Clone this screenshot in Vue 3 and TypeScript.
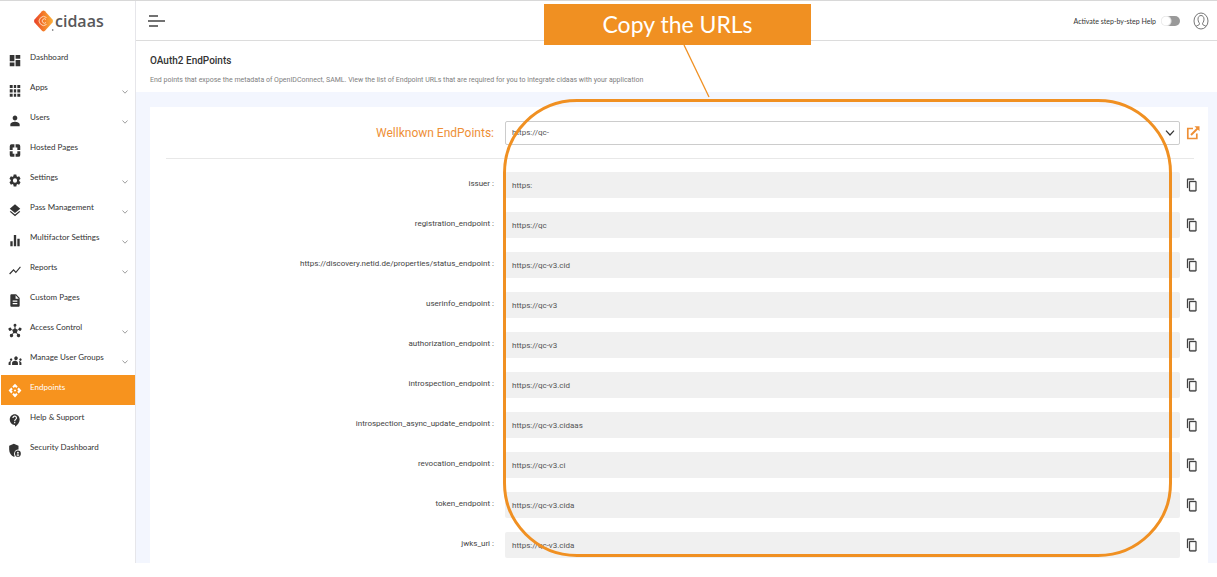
<script setup lang="ts">
import { ref } from 'vue'

interface NavItem {
  label: string
  path: string
  expandable?: boolean
  active?: boolean
}

interface Endpoint {
  name: string
  value: string
}

const navItems: NavItem[] = [
  { label: 'Dashboard', path: 'M3 13h8V3H3v10zm0 8h8v-6H3v6zm10 0h8V11h-8v10zm0-18v6h8V3h-8z' },
  { label: 'Apps', expandable: true, path: 'M3 3h5v5H3zM10 3h4v5h-4zM16 3h5v5h-5zM3 10h5v5H3zM10 10h4v5h-4zM16 10h5v5h-5zM3 17h5v5H3zM10 17h4v5h-4zM16 17h5v5h-5z' },
  { label: 'Users', expandable: true, path: 'M12 12c2.21 0 4-1.79 4-4s-1.79-4-4-4-4 1.79-4 4 1.79 4 4 4zm0 2c-2.67 0-8 1.34-8 4v3h16v-3c0-2.66-5.33-4-8-4z' },
  { label: 'Hosted Pages', path: 'M6 2h5v5H8v4H3V5a3 3 0 0 1 3-3zM13 2h5a3 3 0 0 1 3 3v6h-5V7h-3zM3 13h5v4h3v5H6a3 3 0 0 1-3-3zM16 13h5v6a3 3 0 0 1-3 3h-5v-5h3z' },
  { label: 'Settings', expandable: true, path: 'M19.14 12.94c.04-.3.06-.61.06-.94s-.02-.64-.07-.94l2.03-1.58a.49.49 0 0 0 .12-.61l-1.92-3.32a.49.49 0 0 0-.59-.22l-2.39.96a7 7 0 0 0-1.62-.94l-.36-2.54a.48.48 0 0 0-.48-.41h-3.84c-.24 0-.43.17-.47.41l-.36 2.54c-.59.24-1.13.57-1.62.94l-2.39-.96a.49.49 0 0 0-.59.22L2.74 8.87c-.12.21-.08.47.12.61l2.03 1.58c-.05.3-.09.63-.09.94s.02.64.07.94l-2.03 1.58a.49.49 0 0 0-.12.61l1.92 3.32c.12.22.37.29.59.22l2.39-.96c.5.38 1.03.7 1.62.94l.36 2.54c.05.24.24.41.48.41h3.84c.24 0 .44-.17.47-.41l.36-2.54a7 7 0 0 0 1.62-.94l2.39.96c.22.08.47 0 .59-.22l1.92-3.32a.49.49 0 0 0-.12-.61zM12 15.6A3.6 3.6 0 1 1 12 8.4a3.6 3.6 0 0 1 0 7.2z' },
  { label: 'Pass Management', expandable: true, path: 'M11.99 18.54l-7.37-5.73L3 14.07l9 7 9-7-1.63-1.27-7.38 5.74zM12 16l7.36-5.73L21 9l-9-7-9 7 1.63 1.27L12 16z' },
  { label: 'Multifactor Settings', expandable: true, path: 'M10 21h4V3h-4v18zm-6 0h4v-8H4v8zM16 9v12h4V9h-4z' },
  { label: 'Reports', expandable: true, path: 'M3.5 18.49l6-6.01 4 4L22 6.92l-1.41-1.41-7.09 7.97-4-4L2 16.99z' },
  { label: 'Custom Pages', path: 'M14 2H6c-1.1 0-2 .9-2 2v16c0 1.1.89 2 1.99 2H18c1.1 0 2-.9 2-2V8l-6-6zm2 16H8v-2h8v2zm0-4H8v-2h8v2zm-3-5V3.5L18.5 9H13z' },
  { label: 'Access Control', expandable: true, path: 'M9.5 3.5a2.5 2.5 0 1 1 3.3 2.4v2.7a4 4 0 0 1 2.8 2l2.5-.8a2.5 2.5 0 1 1 .5 1.5l-2.5.8a4 4 0 0 1-.9 2.9l1.9 2.4a2.8 2.8 0 1 1-1.3 1l-1.9-2.4a4 4 0 0 1-3.8 0l-1.9 2.4a2.8 2.8 0 1 1-1.3-1l1.9-2.4a4 4 0 0 1-.9-2.9l-2.5-.8a2.5 2.5 0 1 1 .5-1.5l2.5.8a4 4 0 0 1 2.8-2V5.9a2.5 2.5 0 0 1-1.7-2.4z' },
  { label: 'Manage User Groups', expandable: true, path: 'M12 6a3 3 0 1 1 0 5 3 3 0 0 1 0-5zM4 9a2 2 0 1 1 0 3 2 2 0 0 1 0-3zM20 9a2 2 0 1 1 0 3 2 2 0 0 1 0-3zM7 19v-3c0-2 2-3.5 5-3.5s5 1.5 5 3.5v3zM1 19v-3c0-2 2-3 4.5-3-1 1-1 2-1 3v3zM23 19v-3c0-2-2-3-4.5-3 1 1 1 2 1 3v3z' },
  { label: 'Endpoints', active: true, path: 'M14 12l-2 2-2-2 2-2 2 2zm-2-6l2.12 2.12 2.5-2.5L12 1 7.38 5.62l2.5 2.5L12 6zm-6 6l2.12-2.12-2.5-2.5L1 12l4.62 4.62 2.5-2.5L6 12zm12 0l-2.12 2.12 2.5 2.5L23 12l-4.62-4.62-2.5 2.5L18 12zm-6 6l-2.12-2.12-2.5 2.5L12 23l4.62-4.62-2.5-2.5L12 18z' },
  { label: 'Help & Support', path: 'M11.5 2C6.81 2 3 5.81 3 10.5S6.81 19 11.5 19h.5v3c4.86-2.34 8-7 8-11.5C20 5.81 16.19 2 11.5 2zm1 14.5h-2v-2h2v2zm0-3.5h-2c0-3.25 3-3 3-5 0-1.1-.9-2-2-2s-2 .9-2 2h-2c0-2.21 1.79-4 4-4s4 1.79 4 4c0 2.5-3 2.75-3 5z' },
  { label: 'Security Dashboard', path: 'M10 1L2 4.5v6C2 16 5.5 20.5 10 22l1.5-.6A7 7 0 0 1 18 10.5V4.5zM17 12a5 5 0 1 0 0 10 5 5 0 0 0 0-10zm0 2a1.5 1.5 0 1 1 0 3 1.5 1.5 0 0 1 0-3zm0 6.5a3 3 0 0 1-2.5-1.5c.5-.8 1.5-1 2.5-1s2 .2 2.5 1a3 3 0 0 1-2.5 1.5z' },
]

const endpoints: Endpoint[] = [
  { name: 'issuer', value: 'https:' },
  { name: 'registration_endpoint', value: 'https://qc' },
  { name: 'https://discovery.netid.de/properties/status_endpoint', value: 'https://qc-v3.cid' },
  { name: 'userinfo_endpoint', value: 'https://qc-v3' },
  { name: 'authorization_endpoint', value: 'https://qc-v3' },
  { name: 'introspection_endpoint', value: 'https://qc-v3.cid' },
  { name: 'introspection_async_update_endpoint', value: 'https://qc-v3.cidaas' },
  { name: 'revocation_endpoint', value: 'https://qc-v3.ci' },
  { name: 'token_endpoint', value: 'https://qc-v3.cida' },
  { name: 'jwks_uri', value: 'https://qc-v3.cida' },
]

const helpEnabled = ref(false)
const wellknown = ref('https://qc-')

function copy(value: string): void {
  void navigator.clipboard?.writeText(value)
}
</script>

<template>
  <div class="app">
    <aside class="sidebar">
      <a class="logo" href="#" aria-label="cidaas">
        <svg class="logo-mark" viewBox="0 0 20 22" aria-hidden="true">
          <defs>
            <linearGradient id="mark" x1="0" y1="0" x2="1" y2="0">
              <stop offset="0" stop-color="#e8402a" />
              <stop offset="0.5" stop-color="#f47c28" />
              <stop offset="1" stop-color="#fbb03b" />
            </linearGradient>
          </defs>
          <path d="M8.5 1.2Q10 0 11.5 1.2L19 9.5Q20 11 19 12.5L11.5 20.8Q10 22 8.5 20.8L1 12.5Q0 11 1 9.5Z" fill="url(#mark)" />
          <path d="M13 7.5A4.5 4.5 0 1 0 13 14.5M12.5 9.5A2.2 2.2 0 1 0 12.5 12.5" fill="none" stroke="#ffd9b8" stroke-width="1" />
          <circle cx="19.2" cy="20" r=".8" fill="#58585a" />
        </svg>
        <span class="logo-text">cidaas</span>
      </a>
      <nav class="nav">
        <a
          v-for="item in navItems"
          :key="item.label"
          href="#"
          class="nav-item"
          :class="{ active: item.active }"
        >
          <svg class="nav-icon" viewBox="0 0 24 24" preserveAspectRatio="none" aria-hidden="true">
            <path :d="item.path" fill="currentColor" fill-rule="evenodd" />
          </svg>
          <span class="nav-label">{{ item.label }}</span>
          <svg v-if="item.expandable" class="nav-chevron" viewBox="0 0 6 4" aria-hidden="true">
            <path d="M.5.5L3 3.2 5.5.5" fill="none" stroke="#888" stroke-width=".8" />
          </svg>
        </a>
      </nav>
    </aside>

    <div class="main">
      <header class="topbar">
        <button class="menu-button" type="button" aria-label="Toggle menu">
          <svg viewBox="0 0 18 12" aria-hidden="true">
            <path d="M1 1h9M0 6h17M1 11h9" stroke="#444" stroke-width="1.5" />
          </svg>
        </button>
        <div class="topbar-right">
          <label class="help">
            <span>Activate step-by-step Help</span>
            <input v-model="helpEnabled" class="toggle" type="checkbox" />
          </label>
          <button class="avatar" type="button" aria-label="Account">
            <svg viewBox="0 0 16 18" aria-hidden="true">
              <g fill="none" stroke="#666" stroke-width=".9">
                <ellipse cx="8" cy="9" rx="7" ry="8" />
                <path d="M3 14.5c.5-1.2 3.3-1 3.6-2.5 0-1-1.6-2-1.6-4.8C5 5 6.2 3.5 8 3.5S11 5 11 7.2C11 10 9.4 11 9.4 12c.3 1.5 3.1 1.3 3.6 2.5" />
              </g>
            </svg>
          </button>
        </div>
      </header>

      <section class="intro">
        <h1>OAuth2 EndPoints</h1>
        <p>End points that expose the metadata of OpenIDConnect, SAML. View the list of Endpoint URLs that are required for you to integrate cidaas with your application</p>
      </section>

      <main class="content">
        <form class="card" @submit.prevent>
          <div class="row wellknown">
            <label for="wellknown">Wellknown EndPoints:</label>
            <div class="select-wrap">
              <select id="wellknown" v-model="wellknown">
                <option>https://qc-</option>
              </select>
              <svg class="select-chevron" viewBox="0 0 10 6" aria-hidden="true">
                <path d="M1 .7l4 4.3L9 .7" fill="none" stroke="#333" stroke-width="1.2" />
              </svg>
            </div>
            <a class="open-link" href="#" aria-label="Open endpoint">
              <svg viewBox="0 0 14 14" aria-hidden="true">
                <path d="M7 2.5H1.8v10h9V7.5" fill="none" stroke="#ee8f36" stroke-width="1.7" />
                <path d="M5 9l6.5-6.5" stroke="#ee8f36" stroke-width="2" />
                <path d="M8.5.3H13.5V5.3z" fill="#ee8f36" />
              </svg>
            </a>
          </div>
          <hr />
          <div class="rows">
            <div v-for="(endpoint, index) in endpoints" :key="endpoint.name" class="row">
              <label :for="`endpoint-${index}`">{{ endpoint.name }} :</label>
              <input :id="`endpoint-${index}`" type="text" readonly :value="endpoint.value" />
              <button class="copy" type="button" :aria-label="`Copy ${endpoint.name}`" @click="copy(endpoint.value)">
                <svg viewBox="0 0 24 24" preserveAspectRatio="none" aria-hidden="true">
                  <path d="M16 1H4c-1.1 0-2 .9-2 2v14h2V3h12V1zm3 4H8c-1.1 0-2 .9-2 2v14c0 1.1.9 2 2 2h11c1.1 0 2-.9 2-2V7c0-1.1-.9-2-2-2zm0 16H8V7h11v14z" fill="#444" stroke="#444" stroke-width=".5" />
                </svg>
              </button>
            </div>
          </div>
          <div class="outline"></div>
          <div class="callout">
            Copy the URLs
            <svg class="callout-line" viewBox="0 0 27 54" aria-hidden="true">
              <path d="M1 0l25 52" stroke="#f09022" stroke-width="1.3" />
            </svg>
          </div>
        </form>
      </main>
    </div>
  </div>
</template>

<style>
body {
  margin: 0;
  background: #fff;
}
</style>

<style scoped>
* {
  box-sizing: border-box;
}

.app {
  display: flex;
  border-top: 1px solid #d8d8d8;
  font-family: Roboto, "Liberation Sans", sans-serif;
  color: #333;
}

a {
  color: inherit;
  text-decoration: none;
}

button {
  display: flex;
  padding: 0;
  border: 0;
  background: none;
}

svg {
  display: block;
}

.sidebar {
  flex: none;
  width: 136px;
  padding-left: 1px;
  border-right: 1px solid #e6e6ea;
}

.logo {
  display: flex;
  align-items: center;
  height: 44px;
  padding: 0 0 4px 32px;
}

.logo-mark {
  width: 21px;
  height: 22px;
}

.logo-text {
  margin-left: 1px;
  font: 600 16px/22px "Open Sans", "Noto Sans", sans-serif;
  color: #58585a;
}

.nav-item {
  display: flex;
  align-items: center;
  height: 30px;
  padding: 0 7px;
}

.nav-item.active {
  background: #f7931e;
  color: #fff;
}

.nav-icon {
  width: 14px;
  height: 15px;
}

.nav-label {
  flex: 1;
  margin-left: 8px;
  padding-bottom: 6px;
  font-family: Lato, "Liberation Sans", sans-serif;
  font-size: 8px;
  line-height: 12px;
  white-space: nowrap;
}

.nav-chevron {
  width: 6px;
  height: 4px;
  margin-top: 4px;
}

.main {
  flex: 1;
  min-width: 0;
  display: flex;
  flex-direction: column;
}

.topbar {
  display: flex;
  align-items: center;
  justify-content: space-between;
  height: 40px;
  padding: 0 8px 0 12px;
  border-bottom: 1px solid #dcdcdc;
}

.menu-button svg {
  width: 18px;
  height: 12px;
}

.topbar-right,
.help {
  display: flex;
  align-items: center;
}

.topbar-right {
  gap: 13px;
}

.help {
  gap: 5px;
  font-family: Lato, "Liberation Sans", sans-serif;
  font-size: 7px;
  line-height: 12px;
}

.toggle {
  appearance: none;
  width: 19px;
  height: 10px;
  margin: 0;
  border-radius: 5px;
  background: radial-gradient(circle at 5px 50%, #fff 4px, #ddd 5px, #999 6px);
}

.avatar svg {
  width: 16px;
  height: 18px;
}

.intro {
  height: 51px;
  padding: 13px 14px 0;
}

.intro h1 {
  margin: 0;
  font-size: 10px;
  font-weight: 500;
  line-height: 14px;
}

.intro p {
  margin: 7px 0 0;
  font-size: 7px;
  line-height: 10px;
  color: #808080;
}

.content {
  flex: 1;
  padding: 15px 9px 0 14px;
  background: #f3f6fe;
}

.card {
  position: relative;
  padding: 14px 8px 5px 16px;
  background: #fff;
}

.row {
  display: grid;
  grid-template-columns: minmax(0, 333fr) minmax(0, 675fr) 14px;
  column-gap: 6px;
  align-items: center;
}

.row label {
  padding: 0 5px 3px 0;
  font-size: 8px;
  line-height: 12px;
  text-align: right;
  color: #444;
}

.row input,
.row select {
  width: 100%;
  height: 26px;
  padding: 0 7px;
  border: 0;
  border-radius: 2px;
  outline: 0;
  background: #f0f0f0;
  font: 8px/12px Roboto, "Liberation Sans", sans-serif;
  color: #555;
}

.row.wellknown label {
  padding-bottom: 0;
  font-size: 12px;
  line-height: 18px;
  color: #ee8f36;
}

.select-wrap {
  position: relative;
}

.row select {
  display: block;
  appearance: none;
  height: 24px;
  padding: 0 6px;
  border: 1px solid #ccc;
  background: #fff;
}

.select-chevron {
  position: absolute;
  top: 9px;
  right: 5px;
  width: 10px;
  height: 6px;
  pointer-events: none;
}

.open-link svg {
  width: 14px;
  height: 14px;
}

hr {
  height: 1px;
  margin: 13px 6px 13px 0;
  border: 0;
  background: #e8e8e8;
}

.rows {
  display: grid;
  row-gap: 14px;
}

.copy svg {
  width: 12px;
  height: 14px;
}

.outline {
  position: absolute;
  z-index: 1;
  top: -8px;
  right: 36px;
  bottom: 6px;
  left: 353px;
  border: 3px solid #f09022;
  border-radius: 74px;
  pointer-events: none;
}

.callout {
  position: absolute;
  z-index: 2;
  top: -103px;
  left: 394px;
  width: 267px;
  background: #f09022;
  color: #fff;
  font: 23px/41px Lato, sans-serif;
  text-align: center;
}

.callout-line {
  position: absolute;
  top: 100%;
  left: 52%;
  width: 27px;
  height: 54px;
}
</style>
